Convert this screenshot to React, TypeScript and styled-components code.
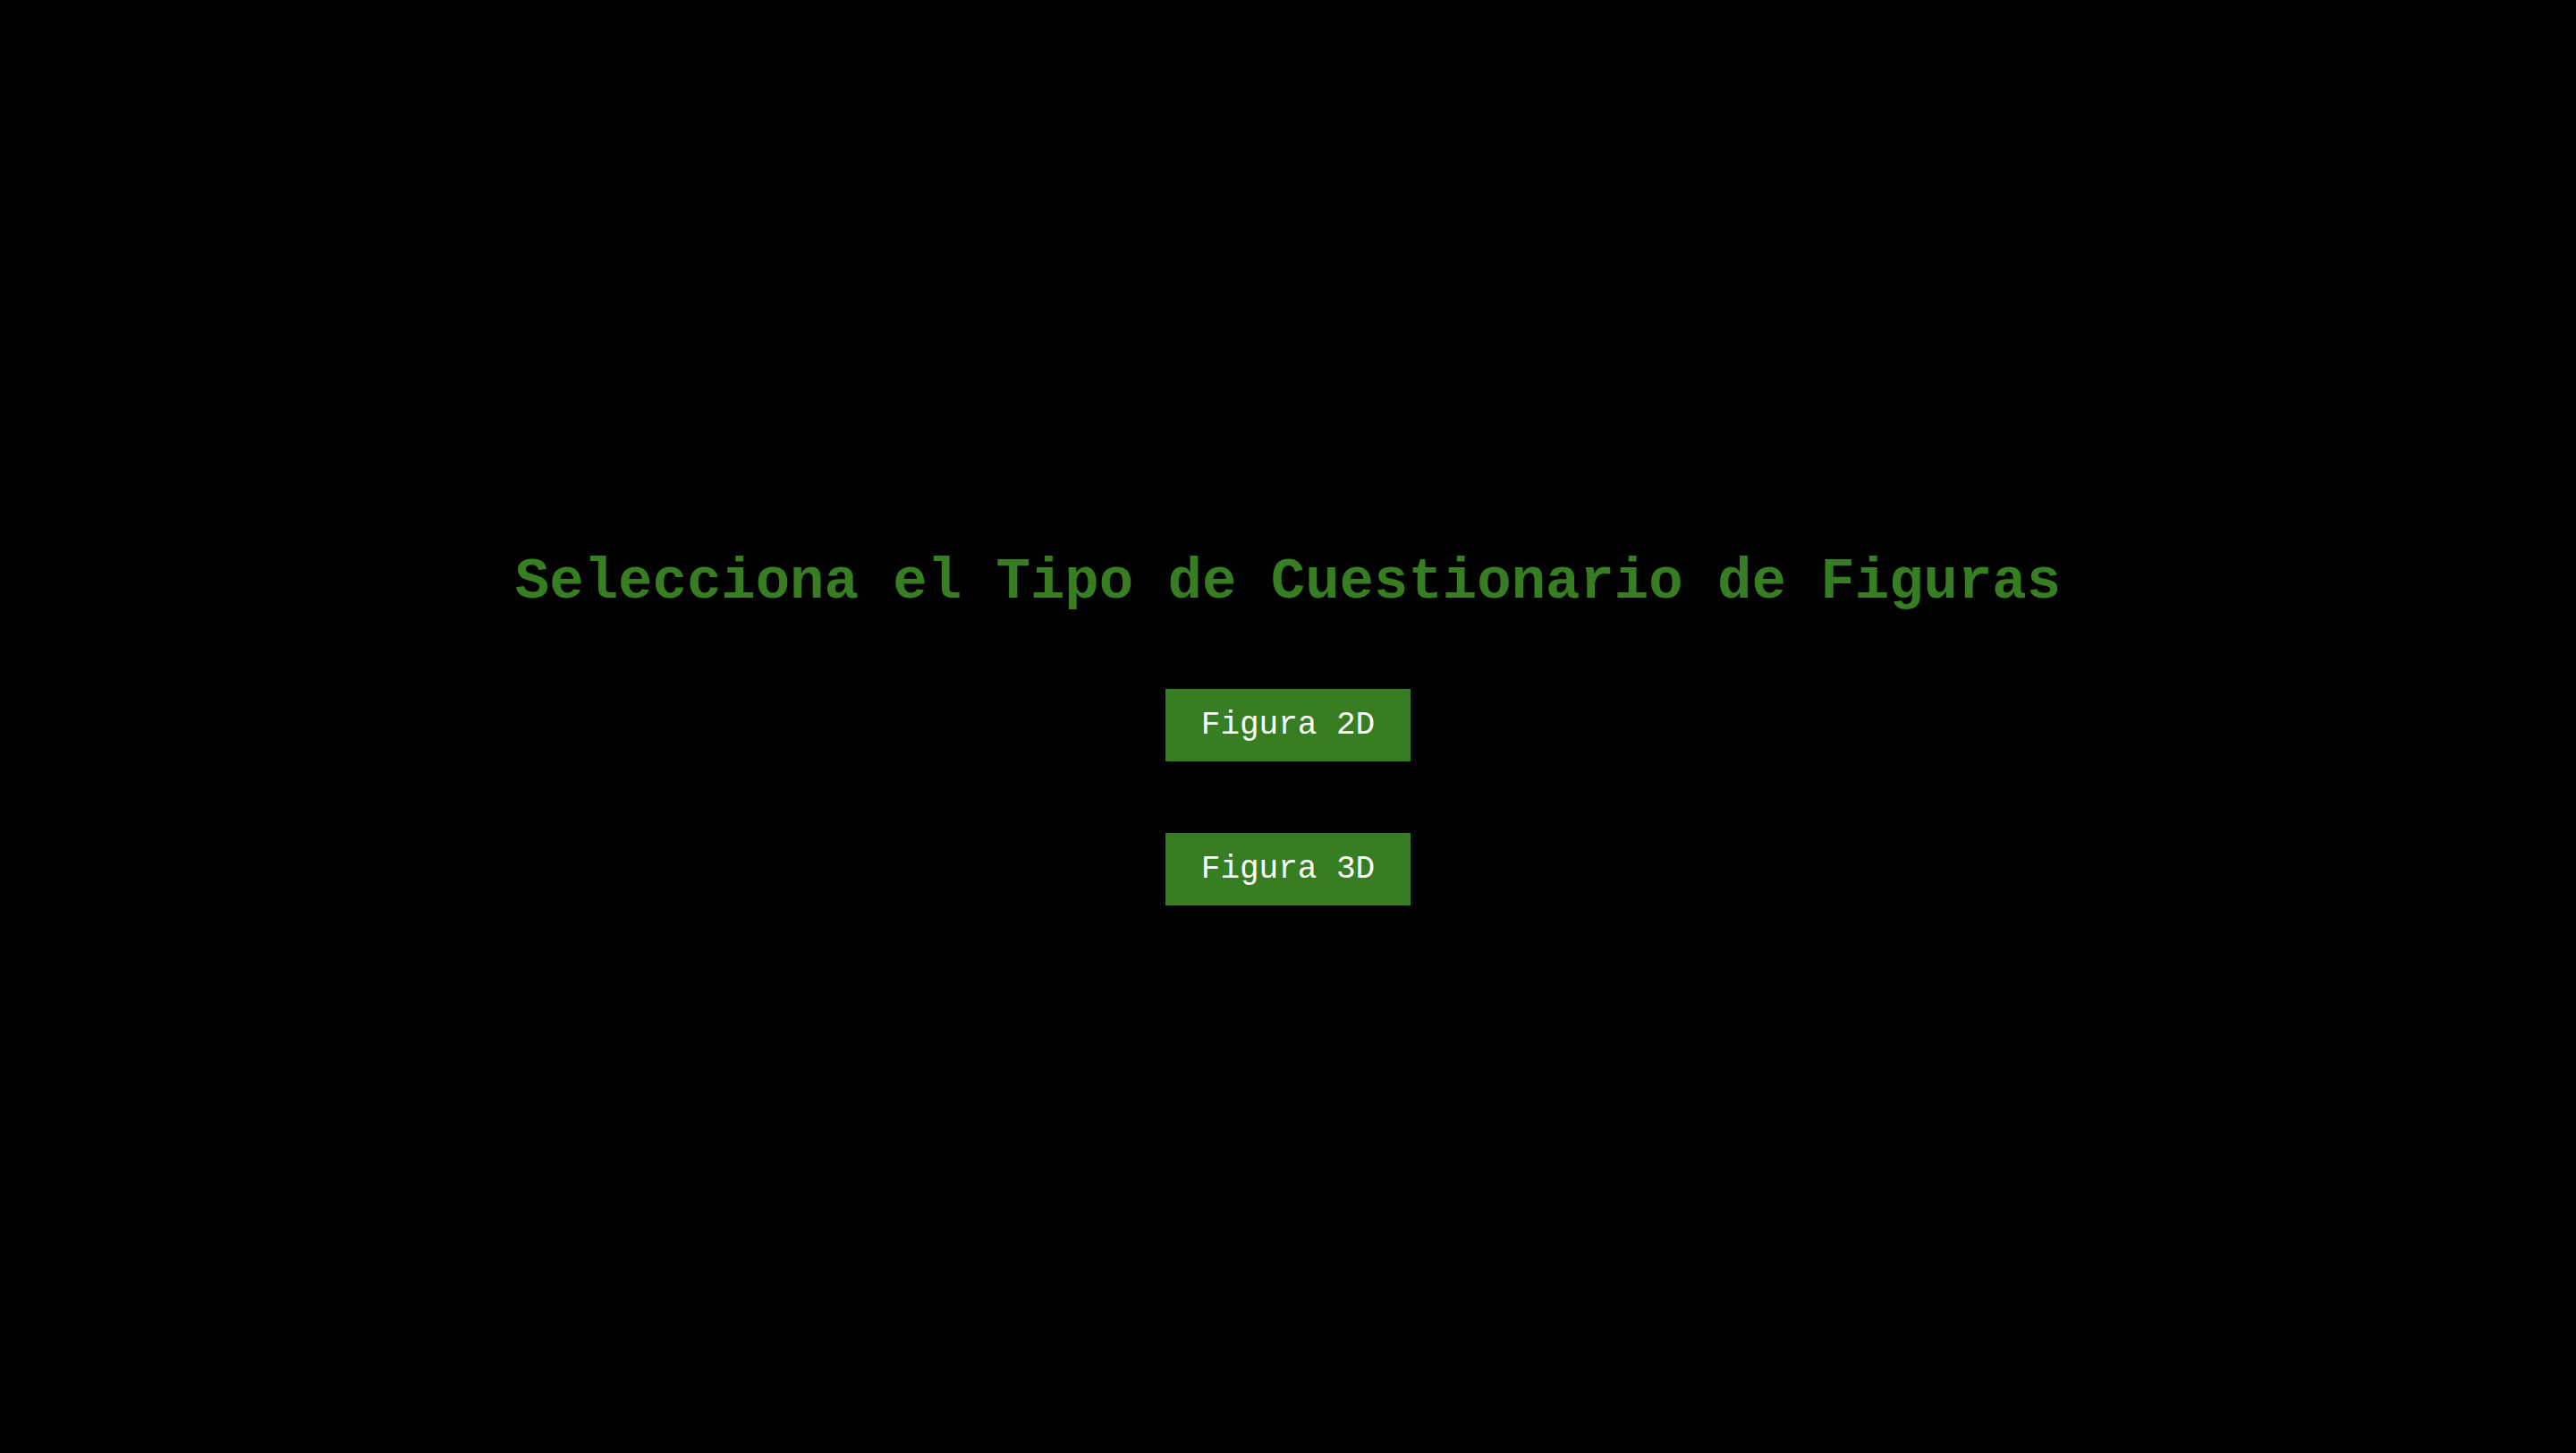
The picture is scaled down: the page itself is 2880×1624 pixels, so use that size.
import React from "react";
import styled, { createGlobalStyle } from "styled-components";

const GlobalStyle = createGlobalStyle`
  body {
    margin: 0;
    background: #000;
    font-family: "Courier New", "Liberation Mono", monospace;
  }
`;

const Page = styled.main`
  min-height: 100vh;
  display: flex;
  flex-direction: column;
  align-items: center;
  justify-content: center;
  gap: 80px;
`;

const Title = styled.h1`
  margin: 0;
  color: #377e22;
  font-size: 64px;
  line-height: 78px;
  font-weight: bold;
  text-align: center;
`;

const Options = styled.div`
  display: flex;
  flex-direction: column;
  gap: 80px;
`;

const OptionButton = styled.button`
  padding: 20px 40px;
  border: 0;
  background: #377e22;
  color: #fff;
  font-family: inherit;
  font-size: 36px;
  line-height: 41px;
  cursor: pointer;
`;

const figures = ["Figura 2D", "Figura 3D"];

export default function App() {
  return (
    <>
      <GlobalStyle />
      <Page>
        <Title>Selecciona el Tipo de Cuestionario de Figuras</Title>
        <Options>
          {figures.map((figure) => (
            <OptionButton key={figure} type="button">
              {figure}
            </OptionButton>
          ))}
        </Options>
      </Page>
    </>
  );
}
